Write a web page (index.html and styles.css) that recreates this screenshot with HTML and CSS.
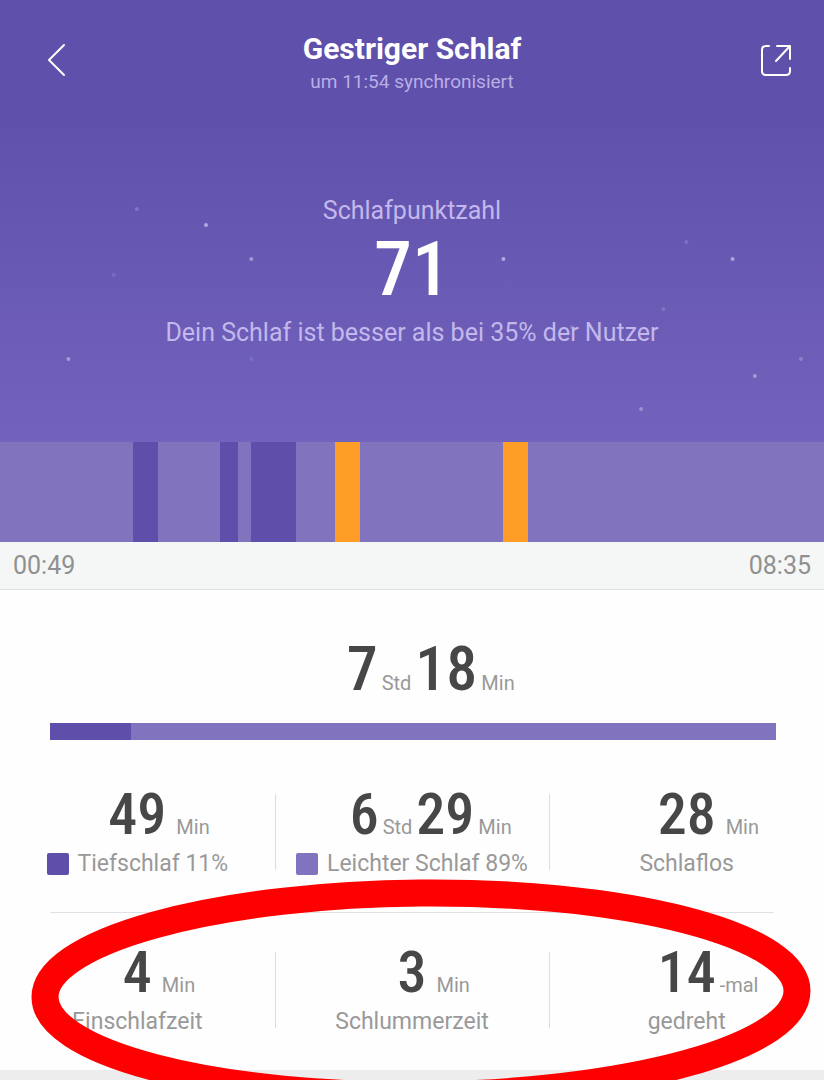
FILE: index.html
```html
<!DOCTYPE html>
<html lang="de">

<head>
    <meta charset="UTF-8">
    <meta name="viewport" content="width=device-width, initial-scale=1.0">
    <title>Gestriger Schlaf</title>
    <link rel="stylesheet" href="styles.css">
</head>

<body>
    <main class="page">
        <section class="hero">
            <svg class="stars" aria-hidden="true">
                <circle cx="16.6%" cy="209" r="2" opacity="0.25" />
                <circle cx="25%" cy="225" r="2" opacity="0.65" />
                <circle cx="30.5%" cy="259" r="2" opacity="0.5" />
                <circle cx="13.8%" cy="275" r="2" opacity="0.15" />
                <circle cx="61.1%" cy="259" r="2" opacity="0.65" />
                <circle cx="83.3%" cy="242" r="2" opacity="0.2" />
                <circle cx="88.9%" cy="259" r="2" opacity="0.6" />
                <circle cx="80.5%" cy="309" r="2" opacity="0.2" />
                <circle cx="69.4%" cy="327" r="2" opacity="0.2" />
                <circle cx="8.3%" cy="359" r="2" opacity="0.5" />
                <circle cx="30.5%" cy="359" r="2" opacity="0.15" />
                <circle cx="97.2%" cy="359" r="2" opacity="0.3" />
                <circle cx="91.6%" cy="376" r="2" opacity="0.5" />
                <circle cx="77.8%" cy="409" r="2" opacity="0.4" />
            </svg>

            <header class="topbar">
                <button class="icon-btn" type="button" aria-label="Zurück">
                    <svg width="36" height="36" viewBox="0 0 36 36">
                        <path d="M34 3 L19 18 L34 33" />
                    </svg>
                </button>
                <div class="heading">
                    <h1>Gestriger Schlaf</h1>
                    <p class="synced">um 11:54 synchronisiert</p>
                </div>
                <button class="icon-btn" type="button" aria-label="Teilen">
                    <svg width="36" height="36" viewBox="0 0 36 36">
                        <path d="M11 4 H8 Q4 4 4 8 V29 Q4 33 8 33 H28 Q32 33 32 29 V26" />
                        <path d="M19 4 H32 V17 M32 4 L18 19" />
                    </svg>
                </button>
            </header>

            <div class="score">
                <p class="score-text">Schlafpunktzahl</p>
                <p class="score-value">71</p>
                <p class="score-text">Dein Schlaf ist besser als bei 35% der Nutzer</p>
            </div>
        </section>

        <!-- one block per sleep phase, flex-grow = length -->
        <div class="timeline">
            <span class="light" style="flex-grow: 133"></span>
            <span class="deep" style="flex-grow: 25"></span>
            <span class="light" style="flex-grow: 62"></span>
            <span class="deep" style="flex-grow: 18"></span>
            <span class="light" style="flex-grow: 13"></span>
            <span class="deep" style="flex-grow: 45"></span>
            <span class="light" style="flex-grow: 39"></span>
            <span class="awake" style="flex-grow: 25"></span>
            <span class="light" style="flex-grow: 143"></span>
            <span class="awake" style="flex-grow: 25"></span>
            <span class="light" style="flex-grow: 296"></span>
        </div>
        <div class="times">
            <time>00:49</time>
            <time>08:35</time>
        </div>

        <section class="details">
            <p class="value value-total tight">
                <span class="number">7<small>Std</small>18</span>
                <small>Min</small>
            </p>
            <!-- minutes: 49 deep, 389 light -->
            <div class="ratio">
                <span class="deep" style="flex-grow: 49"></span>
                <span class="light" style="flex-grow: 389"></span>
            </div>

            <div class="stats">
                <div class="stat">
                    <p class="value"><span class="number">49</span><small>Min</small></p>
                    <p class="label"><i class="swatch deep"></i>Tiefschlaf 11%</p>
                </div>
                <div class="stat">
                    <p class="value tight"><span class="number">6<small>Std</small>29</span><small>Min</small></p>
                    <p class="label"><i class="swatch light"></i>Leichter Schlaf 89%</p>
                </div>
                <div class="stat">
                    <p class="value"><span class="number">28</span><small>Min</small></p>
                    <p class="label">Schlaflos</p>
                </div>
            </div>

            <hr>

            <div class="stats">
                <div class="stat">
                    <p class="value"><span class="number">4</span><small>Min</small></p>
                    <p class="label">Einschlafzeit</p>
                </div>
                <div class="stat">
                    <p class="value"><span class="number">3</span><small>Min</small></p>
                    <p class="label">Schlummerzeit</p>
                </div>
                <div class="stat">
                    <p class="value tight"><span class="number">14</span><small>-mal</small></p>
                    <p class="label">gedreht</p>
                </div>
            </div>

            <svg class="marker" viewBox="0 0 824 240" preserveAspectRatio="none" aria-hidden="true">
                <ellipse cx="421" cy="120" rx="376" ry="101" transform="rotate(-0.5 421 120)" />
            </svg>
        </section>
    </main>
</body>

</html>
```
FILE: styles.css
```css
* {
    box-sizing: border-box;
    margin: 0;
    padding: 0;
}

body {
    font-family: Roboto, "Liberation Sans", sans-serif;
    background-color: #ededee;
}

.page {
    min-height: 100vh;
    overflow: hidden;
}

.hero {
    position: relative;
    padding-bottom: 93px;
    background: linear-gradient(#5f50ab 110px, #7363bd);
    color: #fff;
    text-align: center;
}

.stars {
    position: absolute;
    inset: 0;
    width: 100%;
    height: 100%;
    fill: #dcd4f5;
}

.topbar {
    display: flex;
    justify-content: space-between;
    padding: 31px 30px 0;
}

.icon-btn {
    width: 36px;
    height: 36px;
    margin-top: 11px;
    border: none;
    background: none;
    cursor: pointer;
}

.icon-btn svg {
    display: block;
    fill: none;
    stroke: #fff;
    stroke-width: 2;
    stroke-linecap: round;
    stroke-linejoin: round;
}

h1 {
    font-size: 30px;
    line-height: 36px;
    font-weight: 700;
}

.synced {
    margin-top: 3px;
    font-size: 19px;
    line-height: 24px;
    color: #b9aee5;
}

.score {
    margin-top: 101px;
}

.score-text {
    font-size: 25px;
    line-height: 32px;
    color: #c3b8ec;
}

.score-value {
    margin: 2px 0 8px;
    font-family: "Roboto Condensed", "Liberation Sans Narrow", Roboto, sans-serif;
    font-size: 76px;
    line-height: 80px;
    font-weight: 500;
}

.deep {
    background-color: #5f4fab;
}

.light {
    background-color: #8173bd;
}

.awake {
    background-color: #ff9e27;
}

.timeline {
    display: flex;
    height: 100px;
}

.times {
    display: flex;
    justify-content: space-between;
    padding: 8px 13px 7px;
    border-bottom: 1px solid #dfe2e2;
    background-color: #f5f7f7;
    color: #8f9191;
    font-size: 25px;
    line-height: 32px;
}

.details {
    position: relative;
    padding: 47px 0 34px;
    background-color: #fefefe;
}

/* number stays centered, the last unit hangs to its right */
.value {
    display: grid;
    grid-template-columns: 1fr auto 1fr;
    align-items: baseline;
    column-gap: 10px;
    font-size: 58px;
    line-height: 56px;
    font-weight: 500;
    color: #474747;
}

.value::before {
    content: "";
}

.value-total {
    font-size: 62px;
    line-height: 64px;
}

.number {
    font-family: "Roboto Condensed", "Liberation Sans Narrow", Roboto, sans-serif;
}

.tight {
    column-gap: 4px;
}

.value small {
    font-family: Roboto, "Liberation Sans", sans-serif;
    font-size: 20px;
    line-height: 24px;
    font-weight: 400;
    color: #999;
}

.number small {
    margin: 0 4px;
}

.ratio {
    display: flex;
    height: 17px;
    margin: 22px 48px 46px 50px;
}

.stats {
    display: grid;
    grid-template-columns: repeat(3, 1fr);
}

.stat + .stat {
    background: linear-gradient(#dcdcdc, #dcdcdc) left center / 1px 76px no-repeat;
}

.label {
    display: flex;
    justify-content: center;
    align-items: center;
    gap: 9px;
    margin-top: 8px;
    font-size: 23px;
    line-height: 28px;
    color: #999;
}

.swatch {
    width: 22px;
    height: 22px;
    border-radius: 2px;
}

hr {
    margin: 34px 50px 31px;
    border: none;
    border-top: 1px solid #dfe2e4;
}

.marker {
    position: absolute;
    left: 0;
    bottom: -44px;
    width: 100%;
    height: 240px;
    fill: none;
    stroke: #ff0000;
    stroke-width: 27;
}
```
